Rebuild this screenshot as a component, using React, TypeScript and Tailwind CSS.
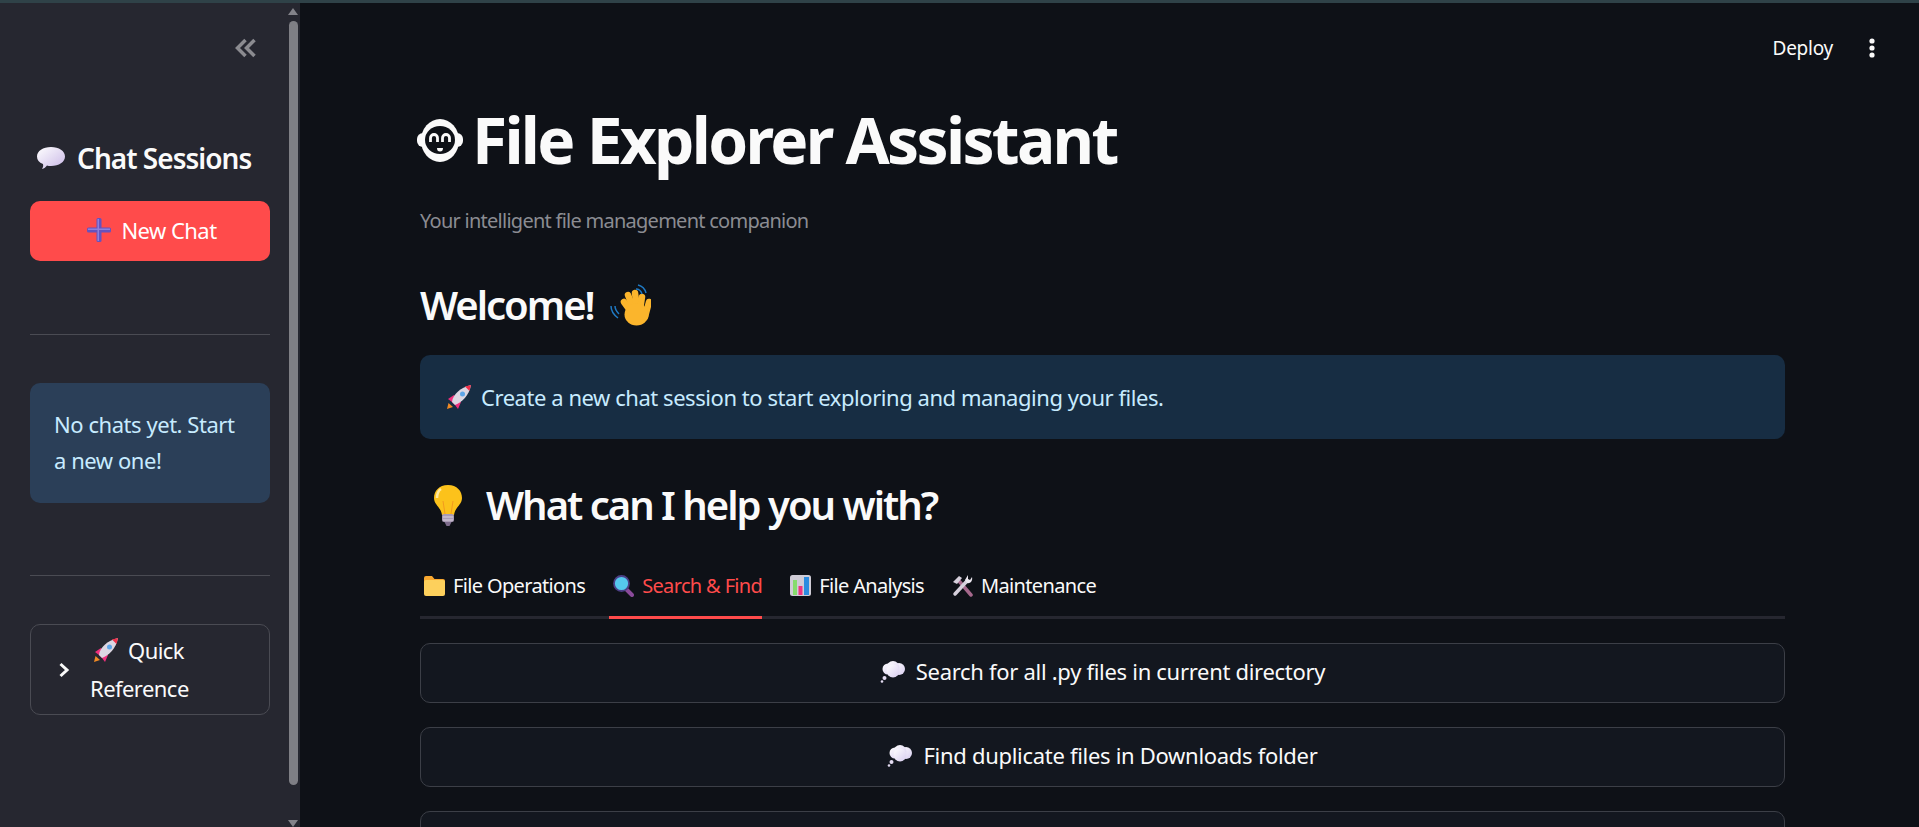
import React from 'react';

const font = { fontFamily: '"Noto Sans", sans-serif' };

const Robot = () => (
  <svg width="46" height="43" viewBox="0 0 46 43" className="-ml-[3px] shrink-0">
    <rect x="0" y="14" width="46" height="14" rx="6" fill="#fafafa" />
    <ellipse cx="23" cy="21.500" rx="19" ry="21.500" fill="#fafafa" />
    <ellipse cx="23" cy="21" rx="15" ry="14" fill="#0e1117" />
    <path d="M13.500 23 v-4 a3.500 3.500 0 0 1 7 0 v4 M25.500 23 v-4 a3.500 3.500 0 0 1 7 0 v4" fill="none" stroke="#fafafa" strokeWidth="2.800" />
    <path d="M20 29 h6 a3 3.500 0 0 1 -6 0z" fill="#fafafa" />
  </svg>
);

const Speech = () => (
  <svg width="30" height="24" viewBox="0 0 30 24" className="shrink-0">
    <defs>
      <linearGradient id="sp" x1="0" y1="0" x2="1" y2="1">
        <stop offset="0" stopColor="#ffffff" />
        <stop offset="1" stopColor="#c9b8e6" />
      </linearGradient>
    </defs>
    <path d="M15 1 c8 0 14 4 14 9.500 s-6 9.500 -14 9.500 c-1.500 0 -3 0 -4 -.5 c-1 1.500 -3 3 -5 3.500 c1 -1.500 1.500 -3 1 -5 c-4 -1.500 -6 -4 -6 -7.500 c0 -5.500 6 -9.500 14 -9.500z" fill="url(#sp)" />
  </svg>
);

const Thought = () => (
  <svg width="26" height="22" viewBox="0 0 26 22" className="shrink-0">
    <defs>
      <linearGradient id="th" x1="0" y1="0" x2="1" y2="1">
        <stop offset="0" stopColor="#ffffff" />
        <stop offset="1" stopColor="#d8cdf0" />
      </linearGradient>
    </defs>
    <circle cx="8" cy="8" r="5.500" fill="url(#th)" />
    <circle cx="19" cy="8" r="6" fill="url(#th)" />
    <circle cx="13" cy="6.500" r="6.500" fill="url(#th)" />
    <circle cx="13" cy="10" r="6.500" fill="url(#th)" />
    <circle cx="4.500" cy="17" r="2" fill="#e4dcf2" />
    <circle cx="2" cy="20.500" r="1.300" fill="#e4dcf2" />
  </svg>
);

const Plus = () => (
  <svg width="24" height="24" viewBox="0 0 24 24" className="shrink-0">
    <rect x="9.500" y="0" width="5" height="24" rx="1.500" fill="#6652bd" />
    <rect x="0" y="9.500" width="24" height="5" rx="1.500" fill="#6652bd" />
    <rect x="10.500" y="1" width="1.500" height="22" fill="#8f80dc" />
    <rect x="1" y="10.500" width="22" height="1.500" fill="#8f80dc" />
  </svg>
);

const Rocket = ({ size }: { size: number }) => (
  <svg width={size} height={size} viewBox="0 0 24 24" className="shrink-0">
    <path d="M0 24 l1.500 -6 l4.500 4z" fill="#f08a24" />
    <path d="M1 14 l6 -4 l7 7 l-3 7 l-3 -4 l-3 -3z" fill="#ee2f7c" />
    <path d="M5 17 C6 9 13 3 24 0 C22 11 15 17 8 20z" fill="#dcd6e2" />
    <path d="M18 1.500 l6 -1.500 l-1.500 6z" fill="#f0304a" />
    <circle cx="15.500" cy="9" r="2.500" fill="#5ea5e8" />
  </svg>
);

const Hand = () => (
  <svg width="41" height="42" viewBox="6 4 41 42" className="shrink-0">
    <g stroke="#fbb52c" strokeWidth="6.500" strokeLinecap="round">
      <path d="M28 33 L20 22" />
      <path d="M30 30 L24 15" />
      <path d="M33 28 L31 13" />
      <path d="M36 30 L38 17" />
      <path d="M41 37 L45 22" />
    </g>
    <ellipse cx="32.500" cy="34.500" rx="12" ry="11" fill="#fbb52c" />
    <path d="M34 5 c4 1 7 4 8 8 M32 9 c3 0 5 2 6 5" fill="none" stroke="#1f7ac4" strokeWidth="1.500" />
    <path d="M7 26 c0 5 3 9 7 12 M11 26 c0 3 2 6 4 8" fill="none" stroke="#1f7ac4" strokeWidth="1.500" />
  </svg>
);

const Bulb = () => (
  <svg width="30" height="42" viewBox="0 0 30 42" className="shrink-0">
    <path d="M15 1 C6 1 1 7 1 14 c0 7 7 9 8 17 h12 c1 -8 8 -10 8 -17 c0 -7 -5 -13 -14 -13z" fill="#fcc21b" />
    <path d="M8 5 c-3 2 -4 5 -4 9" fill="none" stroke="#ffe9a0" strokeWidth="2.500" />
    <path d="M12 30 L10 17 M18 30 L20 17" fill="none" stroke="#f29a1f" strokeWidth="1" />
    <rect x="9" y="30" width="12" height="8" rx="2" fill="#a99bb5" />
    <path d="M10 33 h10 M10 36 h10" stroke="#d9d2de" strokeWidth="1" />
    <path d="M11.500 38 h7 l-2 4 h-3z" fill="#7d6c8c" />
  </svg>
);

const Folder = () => (
  <svg width="21" height="20" viewBox="0 0 21 20" className="shrink-0">
    <path d="M0 2 a2 2 0 0 1 2 -2 h6 l2.500 3 h8.500 a2 2 0 0 1 2 2 v5 h-21z" fill="#f8a830" />
    <rect x="0" y="4" width="21" height="16" rx="2" fill="#fdd05c" />
  </svg>
);

const Magnifier = () => (
  <svg width="21" height="22" viewBox="0 0 21 22" className="shrink-0">
    <path d="M13 14 l6 6" stroke="#8a4a9a" strokeWidth="4" strokeLinecap="round" />
    <circle cx="8.500" cy="8.500" r="7.500" fill="#55c8ee" stroke="#4b3f86" strokeWidth="1.800" />
  </svg>
);

const Chart = () => (
  <svg width="21" height="22" viewBox="0 0 21 22" className="shrink-0">
    <rect x="0" y="0" width="21" height="21" rx="2.500" fill="#cfccd6" />
    <rect x="3" y="5" width="4" height="15" fill="#86dc6c" />
    <rect x="8.500" y="11" width="4" height="9" fill="#f0337e" />
    <rect x="14" y="2" width="5" height="18" fill="#2b8ce0" />
  </svg>
);

const Tools = () => (
  <svg width="21" height="22" viewBox="0 0 21 22" className="shrink-0">
    <path d="M7 6 L19 20" stroke="#a5688c" strokeWidth="3.500" strokeLinecap="round" />
    <path d="M1 7 L7 1 L10 3 L5 9z" fill="#d6d0dc" />
    <path d="M15 6 L3 19" stroke="#d6d0dc" strokeWidth="3.500" strokeLinecap="round" />
    <path d="M13 5 L16 0 L16 4 L18 5 L20 2 C21 6 18 9 15 8z" fill="#ece8f0" />
  </svg>
);

const Divider = () => <div className="h-px bg-[#4a4b53]" />;

function Sidebar() {
  return (
    <aside className="flex h-full w-[300px] shrink-0 bg-[#262730]">
      <div className="flex w-[287px] shrink-0 flex-col pl-[30px] pr-[17px]">
        <div className="flex h-[43px] justify-end pr-[13px] pt-[35px]">
          <svg width="22" height="20" viewBox="0 0 22 20" className="shrink-0">
            <path d="M10.500 2 L2.500 10 L10.500 18 M19.500 2 L11.500 10 L19.500 18" fill="none" stroke="#8b8b90" strokeWidth="3.500" />
          </svg>
        </div>
        <h2 className="mt-[94px] flex h-[36px] items-center gap-[11px] pl-[6px] text-[28px] font-semibold tracking-[-0.98px] text-[#fafafa]">
          <Speech />
          Chat Sessions
        </h2>
        <button className="mt-[25px] flex h-[60px] items-center justify-center gap-[10px] rounded-[10px] bg-[#ff4b4b] pb-[2px] pl-[4px] text-[22px] tracking-[-0.55px] text-white">
          <Plus />
          New Chat
        </button>
        <div className="mt-[73px]">
          <Divider />
        </div>
        <div className="mt-[48px] h-[120px] rounded-[10px] bg-[#2b3f58] px-[24px] pt-[23px] text-[22px] leading-[36px] tracking-[-0.45px] text-[#c7ebff]">
          No chats yet. Start a new one!
        </div>
        <div className="mt-[72px]">
          <Divider />
        </div>
        <div className="mt-[48px] flex h-[91px] items-center rounded-[10px] border border-[#4a4b53] pl-[26px] text-[22px] leading-[38px] tracking-[-0.55px] text-[#fafafa]">
          <svg width="14" height="18" viewBox="0 0 14 18" className="shrink-0">
            <path d="M3.500 3 L10 9 L3.500 15" fill="none" stroke="#fafafa" strokeWidth="3" />
          </svg>
          <div className="ml-[19px] pb-[4px]">
            <span className="ml-[4px] inline-flex items-center gap-[10px] align-middle">
              <Rocket size={24} />
              Quick
            </span>
            <div>Reference</div>
          </div>
        </div>
      </div>
      <div className="flex w-[12px] flex-col items-center pt-[4px]">
        <svg width="10" height="8" viewBox="0 0 10 8" className="shrink-0">
          <path d="M5 1 L10 8 H0z" fill="#83838a" />
        </svg>
        <div className="mt-[6px] h-[764px] w-[9px] shrink-0 rounded-full bg-[#7f7f85]" />
        <svg width="10" height="8" viewBox="0 0 10 8" className="mt-[35px] shrink-0">
          <path d="M0 0 H10 L5 7z" fill="#83838a" />
        </svg>
      </div>
    </aside>
  );
}

const PromptButton = ({ label }: { label?: string }) => (
  <button className="flex h-[60px] w-full shrink-0 items-center justify-center gap-[10px] rounded-[10px] border border-[#3c3f47] bg-[#13171f] pb-[3px] text-[22px] tracking-[-0.3px] text-[#fafafa]">
    {label && <Thought />}
    {label}
  </button>
);

const tabs = [
  { icon: <Folder />, label: 'File Operations' },
  { icon: <Magnifier />, label: 'Search & Find', active: true },
  { icon: <Chart />, label: 'File Analysis' },
  { icon: <Tools />, label: 'Maintenance' },
];

function Main() {
  return (
    <main className="flex min-w-0 flex-1 flex-col overflow-hidden bg-[#0e1117]">
      <div className="flex h-[90px] shrink-0 items-center justify-end pr-[43px]">
        <span className="text-[19px] tracking-[-0.25px] text-[#fafafa]">Deploy</span>
        <svg width="8" height="20" viewBox="0 0 8 20" className="ml-[35px] shrink-0">
          <circle cx="4" cy="3" r="2.600" fill="#fafafa" />
          <circle cx="4" cy="10" r="2.600" fill="#fafafa" />
          <circle cx="4" cy="17" r="2.600" fill="#fafafa" />
        </svg>
      </div>
      <div className="ml-[120px] mr-[134px] flex flex-col">
        <h1 className="mt-[12px] flex h-[70px] items-center gap-[9px] text-[64px] font-bold leading-[70px] tracking-[-2.700px] text-[#fafafa]">
          <Robot />
          File Explorer Assistant
        </h1>
        <p className="mt-[31px] text-[20px] leading-[30px] tracking-[-0.74px] text-[#8b8c92]">
          Your intelligent file management companion
        </p>
        <h2 className="mt-[44px] flex h-[50px] items-center gap-[16px] text-[40px] font-semibold tracking-[-2px] text-[#fafafa]">
          Welcome!
          <Hand />
        </h2>
        <div className="mt-[25px] flex h-[84px] items-center gap-[10px] rounded-[10px] bg-[#172d43] px-[27px] text-[22px] tracking-[-0.45px] text-[#c7ebff]">
          <Rocket size={24} />
          Create a new chat session to start exploring and managing your files.
        </div>
        <h2 className="mt-[44px] flex h-[44px] items-center gap-[23px] pl-[13px] text-[40px] font-semibold tracking-[-2px] text-[#fafafa]">
          <Bulb />
          What can I help you with?
        </h2>
        <div className="mt-[37px] flex h-[55px] gap-[24px] border-b-[3px] border-[#262730]">
          {tabs.map((tab) => (
            <div
              key={tab.label}
              className={`-mb-[3px] flex h-[55px] items-center gap-[8px] border-b-[3px] pb-[8px] pl-[4px] text-[20px] tracking-[-0.65px] ${
                tab.active ? 'border-[#ff4b4b] text-[#ff4b4b]' : 'border-transparent text-[#fafafa]'
              }`}
            >
              {tab.icon}
              {tab.label}
            </div>
          ))}
        </div>
        <div className="mt-[24px] flex flex-col gap-[24px]">
          <PromptButton label="Search for all .py files in current directory" />
          <PromptButton label="Find duplicate files in Downloads folder" />
          <PromptButton />
        </div>
      </div>
    </main>
  );
}

export default function App() {
  return (
    <div className="flex h-[827px] w-full flex-col overflow-hidden bg-[#0e1117]" style={font}>
      <div className="h-[3px] shrink-0 bg-[#2f4248]" />
      <div className="flex min-h-0 flex-1">
        <Sidebar />
        <Main />
      </div>
    </div>
  );
}
